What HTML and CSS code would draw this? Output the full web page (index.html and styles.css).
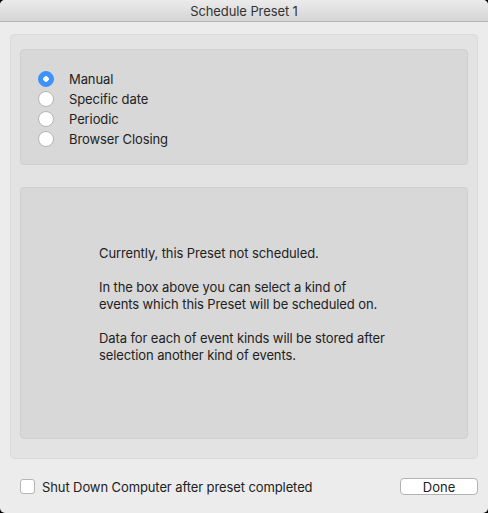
FILE: index.html
```html
<!DOCTYPE html>
<html lang="en">
<head>
    <meta charset="UTF-8">
    <title>Schedule Preset 1</title>
    <link rel="stylesheet" href="styles.css">
</head>
<body>
    <div class="ventana">
        <div class="titulo">Schedule Preset 1</div>
        <div class="contenido">
            <div class="caja">
                <div class="opciones">
                    <label class="opcion"><span class="radio activo"></span>Manual</label>
                    <label class="opcion"><span class="radio"></span>Specific date</label>
                    <label class="opcion"><span class="radio"></span>Periodic</label>
                    <label class="opcion"><span class="radio"></span>Browser Closing</label>
                </div>
                <div class="info">
                    <div class="texto">
                        <p>Currently, this Preset not scheduled.</p>
                        <p>In the box above you can select a kind of<br>events which this Preset will be scheduled on.</p>
                        <p>Data for each of event kinds will be stored after<br>selection another kind of events.</p>
                    </div>
                </div>
            </div>
            <div class="pie">
                <label class="apagar"><span class="check"></span>Shut Down Computer after preset completed</label>
                <button class="boton">Done</button>
            </div>
        </div>
    </div>
</body>
</html>
```

FILE: styles.css
```css
html, body{
    margin: 0;
    height: 100%;
    background: #000;
}
body{
    font-family: Inter, "Liberation Sans", sans-serif;
    font-size: 13px;
    letter-spacing: -0.1px;
    color: #222;
}
.ventana{
    height: 513px;
    background: #ececec;
    border-radius: 5px;
    overflow: hidden;
    display: flex;
    flex-direction: column;
}
.titulo{
    height: 21px;
    line-height: 22px;
    text-align: center;
    background: linear-gradient(#ebebeb, #d5d5d5);
    border-bottom: 1px solid #b4b4b4;
    color: #333;
}
.contenido{
    flex: 1;
    padding: 12px 10px 0 10px;
    display: flex;
    flex-direction: column;
}
.caja{
    box-sizing: border-box;
    height: 425px;
    background: #e3e3e3;
    border: 1px solid #dadada;
    border-radius: 4px;
    padding: 14px 9px 19px 9px;
    display: flex;
    flex-direction: column;
    gap: 22px;
}
.opciones{
    box-sizing: border-box;
    height: 116px;
    flex-shrink: 0;
    background: #d8d8d8;
    border: 1px solid #cfcfcf;
    border-radius: 4px;
    padding: 19px 0 0 17px;
}
.opcion{
    display: flex;
    align-items: center;
    height: 20px;
}
.radio{
    width: 14px;
    height: 14px;
    border-radius: 50%;
    border: 1px solid #b5b5b5;
    background: #fff;
    margin-right: 15px;
}
.radio.activo{
    border-color: #3c8ff7;
    background: radial-gradient(circle, #fff 2.5px, #3d92fb 3px);
}
.info{
    flex: 1;
    background: #d8d8d8;
    border: 1px solid #cfcfcf;
    border-radius: 4px;
    padding: 57px 0 0 78px;
}
.texto p{
    margin: 0 0 17px 0;
    line-height: 17px;
}
.texto p:last-child{
    margin-bottom: 0;
}
.pie{
    display: flex;
    align-items: center;
    justify-content: space-between;
    padding: 19px 0 0 10px;
}
.apagar{
    display: flex;
    align-items: center;
}
.check{
    width: 13px;
    height: 13px;
    border: 1px solid #b5b5b5;
    border-radius: 3px;
    background: #fff;
    margin-right: 7px;
}
.boton{
    width: 78px;
    height: 17px;
    padding: 0;
    font: inherit;
    color: #222;
    background: #fff;
    border: 1px solid #b3b3b3;
    border-radius: 4px;
}
```
